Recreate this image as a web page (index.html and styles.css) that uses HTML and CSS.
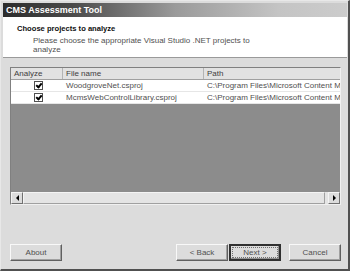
FILE: index.html
```html
<!DOCTYPE html>
<html lang="en">
<head>
    <meta charset="UTF-8">
    <title>CMS Assessment Tool</title>
    <link rel="stylesheet" href="styles.css">
</head>
<body>
  <div class="window">
    <div class="titlebar">CMS Assessment Tool</div>
    <div class="header">
      <h2>Choose projects to analyze</h2>
      <p>Please choose the appropriate Visual Studio .NET projects to analyze</p>
    </div>
    <div class="content">
      <div class="listview">
        <div class="lv-row lv-head">
          <div class="col-check">Analyze</div>
          <div class="col-file">File name</div>
          <div class="col-path">Path</div>
        </div>
        <div class="lv-row">
          <div class="col-check"><span class="check"></span></div>
          <div class="col-file">WoodgroveNet.csproj</div>
          <div class="col-path">C:\Program Files\Microsoft Content Ms</div>
        </div>
        <div class="lv-row">
          <div class="col-check"><span class="check"></span></div>
          <div class="col-file">McmsWebControlLibrary.csproj</div>
          <div class="col-path">C:\Program Files\Microsoft Content Ms</div>
        </div>
        <div class="lv-empty"></div>
        <div class="hscroll">
          <div class="sb-btn sb-left"></div>
          <div class="sb-track"></div>
          <div class="sb-btn sb-right"></div>
        </div>
      </div>
    </div>
    <div class="buttons">
      <button class="btn">About</button>
      <div class="spacer"></div>
      <button class="btn">&lt; Back</button>
      <button class="btn btn-default"><span class="focus">Next &gt;</span></button>
      <button class="btn btn-cancel">Cancel</button>
    </div>
  </div>
</body>
</html>
```

FILE: styles.css
```css
body {
    margin: 0;
    background-color: #ffffff;
    font-family: "Liberation Sans", Arial, sans-serif;
    font-size: 8px;
    color: #404040;
}
.window {
    width: 344px;
    height: 266px;
    background-color: #dcdcdc;
    border-top: 1px solid #e8e8e8;
    border-left: 1px solid #e8e8e8;
    border-right: 2px solid #505050;
    border-bottom: 2px solid #505050;
    padding: 2px 1px 0 2px;
    display: flex;
    flex-direction: column;
}
.titlebar {
    height: 14px;
    line-height: 14px;
    padding-left: 3px;
    color: #ffffff;
    font-weight: bold;
    font-size: 9px;
    background: linear-gradient(to right, #2c2c2c 0%, #4a4a4a 20%, #9a9a9a 50%, #c4c4c4 80%, #cccccc 100%);
}
.header {
    height: 41px;
    background-color: #ffffff;
    border-bottom: 1px solid #9a9a9a;
    padding: 7px 0 0 14px;
    box-sizing: border-box;
}
.header h2 {
    margin: 0;
    font-size: 7.6px;
    font-weight: bold;
    color: #101010;
    line-height: 10px;
}
.header p {
    margin: 2px 0 0 16px;
    width: 230px;
    line-height: 9px;
    color: #505050;
}
.content {
    padding: 9px 6px 0 7px;
}
.listview {
    height: 136px;
    border: 1px solid #808080;
    border-right-color: #f0f0f0;
    border-bottom-color: #f0f0f0;
    background-color: #8c8c8c;
    display: flex;
    flex-direction: column;
}
.lv-row {
    display: flex;
    height: 11px;
    line-height: 11px;
    background-color: #ffffff;
    border-bottom: 1px solid #e6e6e6;
    white-space: nowrap;
    overflow: hidden;
    color: #505050;
}
.lv-head {
    background-color: #e2e2e2;
    border-bottom: 1px solid #a0a0a0;
    color: #404040;
}
.col-check {
    width: 52px;
    padding-left: 3px;
    box-sizing: border-box;
}
.col-file {
    width: 141px;
    padding-left: 3px;
    box-sizing: border-box;
}
.col-path {
    flex: 1;
    padding-left: 3px;
    overflow: hidden;
}
.lv-head .col-check,
.lv-head .col-file {
    border-right: 1px solid #b4b4b4;
}
.lv-row .col-check {
    display: flex;
    justify-content: center;
    align-items: center;
}
.lv-head .col-check {
    display: block;
}
.check {
    width: 7px;
    height: 7px;
    border: 1px solid #505050;
    background-color: #ffffff;
    position: relative;
}
.check::after {
    content: "";
    position: absolute;
    left: 2px;
    top: 0px;
    width: 2px;
    height: 4px;
    border-right: 2px solid #000000;
    border-bottom: 2px solid #000000;
    transform: rotate(40deg);
}
.lv-empty {
    flex: 1;
}
.hscroll {
    height: 12px;
    display: flex;
    background-color: #e4e4e4;
}
.sb-btn {
    width: 12px;
    box-sizing: border-box;
    border: 1px solid #f4f4f4;
    border-right-color: #707070;
    border-bottom-color: #707070;
    background-color: #dcdcdc;
    display: flex;
    align-items: center;
    justify-content: center;
}
.sb-left::after {
    content: "";
    border-top: 3px solid transparent;
    border-bottom: 3px solid transparent;
    border-right: 3px solid #000000;
}
.sb-right::after {
    content: "";
    border-top: 3px solid transparent;
    border-bottom: 3px solid transparent;
    border-left: 3px solid #000000;
}
.sb-track {
    flex: 1;
    border: 1px solid #f4f4f4;
    border-right-color: #a0a0a0;
    border-bottom-color: #a0a0a0;
    margin-right: 3px;
}
.buttons {
    display: flex;
    margin-top: 39px;
    padding: 0 6px 0 7px;
    gap: 1px;
}
.spacer {
    flex: 1;
}
.btn {
    width: 52px;
    height: 17px;
    padding: 0;
    font-family: "Liberation Sans", Arial, sans-serif;
    font-size: 8px;
    color: #505050;
    background-color: #dcdcdc;
    border: 1px solid #f8f8f8;
    border-right-color: #606060;
    border-bottom-color: #606060;
    box-shadow: inset -1px -1px 0 #a0a0a0;
}
.btn-default {
    border: 2px solid #303030;
    box-shadow: inset -1px -1px 0 #909090;
    display: flex;
    padding: 1px;
}
.focus {
    flex: 1;
    display: flex;
    align-items: center;
    justify-content: center;
    border: 1px dotted #707070;
}
.btn-cancel {
    margin-left: 7px;
}
```
